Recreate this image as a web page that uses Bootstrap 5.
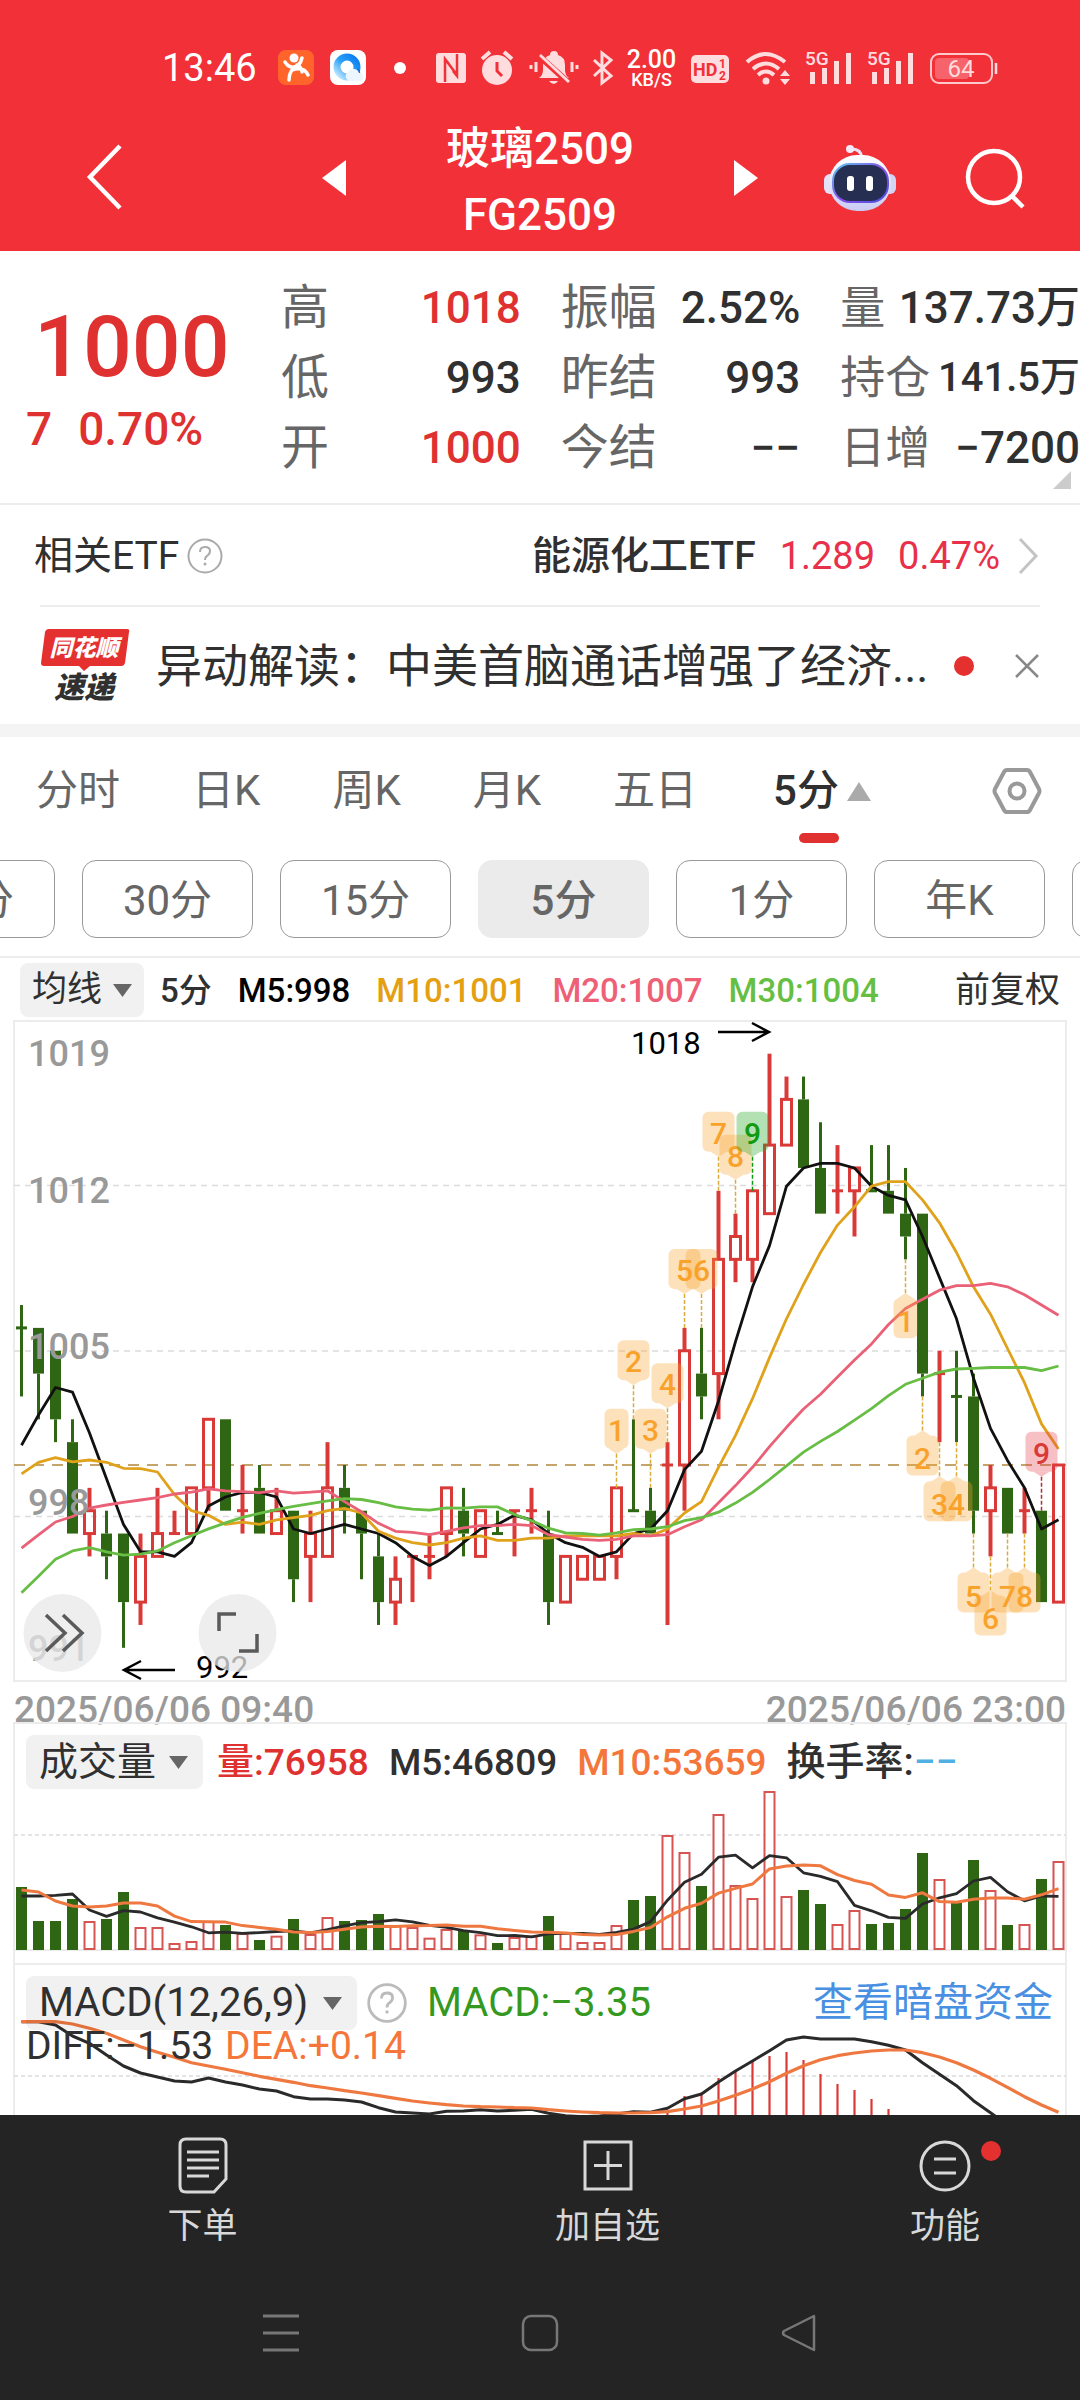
<!DOCTYPE html>
<html lang="zh-CN">
<head>
<meta charset="utf-8">
<meta name="viewport" content="width=device-width, initial-scale=1">
<title>玻璃2509</title>
<link rel="stylesheet" href="https://cdn.jsdelivr.net/npm/bootstrap@5.3.0/dist/css/bootstrap.min.css">
<style>
:root{--up:#e03131;--ink:#303030;--mute:#666;--soft:#999;--line:#ececec}
body{font-family:Roboto,"Noto Sans CJK SC",sans-serif;color:var(--ink);background:#fff;line-height:1}
button{font:inherit;color:inherit;background:none;border:0;padding:0}
svg{display:block;flex:none;overflow:visible}
a{text-decoration:none;color:inherit}
.up{color:var(--up)}
.app-head{background:#f23037;color:#fff;height:251px}
.status-row{height:112px;padding:24px 82px 0 162px}
.status-icons{gap:14px}
.clock{font-size:38px;width:92px}
.speed{width:51px;font-size:25px;line-height:23px;text-align:center;font-weight:500}
.speed-unit{font-size:18px;line-height:18px}
.title-row{height:132px}
.title-side{width:calc((100% - 436px)/2)}
.title-mid{width:436px}
.title-mid h1{font-size:44px;line-height:66px;margin:0;padding-top:8px;font-weight:500;text-align:center}
.pad-back{padding-left:86px}
.pad-tools{padding-right:55px;gap:69px}
.quote{height:254px;border-bottom:2px solid var(--line);position:relative}
.price-col{width:284px;padding:50px 0 0 26px}
.price-big{font-size:86px;line-height:92px;padding-left:8px;font-weight:500}
.price-chg{font-size:46px;line-height:72px;gap:26px;font-weight:500}
.stat-cols{gap:40px;padding-top:22px;min-width:0;margin-left:-3px}
.stat-cols dl{flex:1 1 0;min-width:0;margin:0}
.stat-cols dl>div{display:flex;justify-content:space-between;align-items:center;height:70px;white-space:nowrap}
.stat-cols dt{font-size:48px;font-weight:400;color:var(--mute)}
.stat-cols dd{font-size:44px;font-weight:500;margin:0}
.stat-cols .tight dt{font-size:45px}
.stat-cols .tight .small-val{font-size:40px}
.corner{position:absolute;right:9px;bottom:14px}
.etf-row{height:100px;padding:2px 40px 0 34px;font-size:39px}
.etf-row .nums{font-size:38px;gap:23px;color:#e8304a}
.news-row{height:119px;margin:0 40px;border-top:2px solid var(--line)}
.news-text{font-size:46px;line-height:60px;padding-left:26px;white-space:nowrap}
.news-dot{margin-left:auto;margin-right:40px}
.band{height:13px;background:#f4f4f4}
.period-tabs{height:112px;padding:0 38px 4px 36px;gap:72px;font-size:42px;color:var(--mute)}
.period-tabs a{position:relative;line-height:110px;white-space:nowrap}
.period-tabs a.on{color:var(--ink);font-weight:500}
.period-tabs a.on::after{content:"";position:absolute;right:0;bottom:3px;width:40px;height:10px;border-radius:5px;background:var(--up)}
.pill-row{height:109px;padding-top:11px;gap:27px;overflow:hidden;border-bottom:2px solid var(--line)}
.pill-row button{flex:none;width:171px;height:78px;padding-top:4px;border:1px solid #999;border-radius:14px;font-size:42px;color:var(--mute)}
.pill-row button:first-child{margin-left:-116px}
.pill-row button.on{background:#ebebeb;border-color:#ebebeb;font-weight:500}
.pick{appearance:none;border:0;border-radius:8px;color:var(--ink);background:rgba(0,0,0,.055) url("data:image/svg+xml,%3Csvg xmlns='http://www.w3.org/2000/svg' width='19' height='13'%3E%3Cpath d='M0 0h19l-9.500 13z' fill='%23666'/%3E%3C/svg%3E") no-repeat right 15px center;height:54px;padding:0 48px 0 13px;line-height:54px}
.ma-row{height:62px;padding:2px 20px 0 20px;gap:26px;font-size:33px;font-weight:500;white-space:nowrap}
.ma-row .pick{font-size:35px;padding:0 41px 0 12px;margin-right:-10px;font-weight:400;background-position:right 12px center}
.ma-row .adjust{font-size:35px;font-weight:400}
.plots{padding:0 13px}
.plots svg.plot{width:100%;height:auto;overflow:hidden}
.dates{height:40px;font-size:37px;line-height:56px;color:var(--soft);font-weight:500;padding:0 1px}
.panel{position:relative}
.panel-legend{position:absolute;left:13px;right:14px;top:13px;gap:20px;white-space:nowrap;height:54px}
.vol-legend{font-size:37px;font-weight:500}
.vol-legend .pick{font-size:39px;padding-right:46px;margin-right:-6px;font-weight:400}
.vol-legend .turnover{font-size:39px}
.macd-legend{font-size:40px}
.macd-legend .pick{font-size:40px;margin-right:-10px}
.macd-sub{position:absolute;left:13px;top:61px;font-size:39px;line-height:44px;gap:12px}
.foot{background:#242424;color:#d8d8d8;height:285px}
.foot-item{height:134px;padding-top:20px;gap:14px;font-size:35px}
.w-wide{width:37.5%}
.w-slim{width:25%}
.sys-row{height:168px;gap:223px}
.t-axis{font-size:36px;font-weight:500;fill:#999}
.t-note{font-size:31px;fill:#000}
.t-tag{font-size:30px;font-weight:500;text-anchor:middle}
</style>
</head>
<body>
<header class="app-head">
  <div class="status-row d-flex align-items-center">
    <span class="clock">13:46</span>
    <svg class="ms-4" width="36" height="36" viewBox="0 0 36 36"><rect width="36" height="35" rx="8" fill="#ff652b"/><circle cx="16" cy="8" r="4.500" fill="#fff"/><path d="M7 12q4 6 9 5 6-1 8-9M16 17q-5 6-5 13M14 20q12-4 16 5M19 15q5 2 5 7" stroke="#fff" stroke-width="3.500" fill="none" stroke-linecap="round"/></svg>
    <svg class="ms-3" width="36" height="36" viewBox="0 0 36 36"><defs><linearGradient id="qb" x1="1" y1="0" x2="0" y2="1"><stop offset="0" stop-color="#0b7cf0"/><stop offset=".5" stop-color="#2aa0f5"/><stop offset="1" stop-color="#c9ebff"/></linearGradient></defs><rect width="36" height="35" rx="8" fill="#fff"/><circle cx="17" cy="17" r="10" fill="none" stroke="url(#qb)" stroke-width="7"/><path d="M28 18q3 3 2 8h-6z" fill="#0d6fe0"/><path d="M19 31a5 5 0 0 1-1-9 6 6 0 0 1 11 1 4 4 0 0 1 1 8z" fill="#edf6ff"/></svg>
    <svg width="68" height="36" viewBox="0 0 68 36"><circle cx="34" cy="18" r="6" fill="#fff"/></svg>
    <div class="status-icons d-flex align-items-center ms-auto">
      <svg width="30" height="32" viewBox="0 0 30 32"><rect y="1" width="30" height="30" rx="3" fill="#ffdcde"/><path d="M9 30V7l12 16M9 7q0 0 4 5M21 2v22l-4-5" stroke="#f23037" stroke-width="2.500" fill="none"/></svg>
      <svg width="35" height="36" viewBox="0 0 35 36"><circle cx="17" cy="20" r="15" fill="#ffdcde"/><path d="M2 9l8-7M32 9l-8-7" stroke="#ffdcde" stroke-width="4"/><path d="M17 12v9l5 5" stroke="#f23037" stroke-width="3" fill="none"/></svg>
      <svg width="50" height="36" viewBox="0 0 50 36"><path d="M10 28q4-3 4-8v-5q0-8 7-10q0-4 4-4t4 4q7 2 7 10v5q0 5 4 8zM20 31h9q-4 6-9 0z" fill="#ffdcde"/><path d="M9 5l31 28" stroke="#f23037" stroke-width="6"/><path d="M11 5l29 27" stroke="#ffdcde" stroke-width="3"/><path d="M7 12v10M43 12v10M2 15v4M48 15v4" stroke="#ffdcde" stroke-width="3"/></svg>
      <svg width="19" height="36" viewBox="0 0 19 36"><path d="M1 10l17 16-9 7V3l9 7L1 26" stroke="#ffdcde" stroke-width="3" fill="none"/></svg>
      <div class="speed"><div>2.00</div><div class="speed-unit">KB/S</div></div>
      <svg width="38" height="36" viewBox="0 0 38 36"><rect y="5" width="38" height="28" rx="5" fill="#ffdcde"/><g fill="#f23037" font-weight="700"><text x="2" y="26" font-size="18">HD</text><text x="28" y="18" font-size="12">1</text><text x="28" y="30" font-size="12">2</text></g></svg>
      <svg width="48" height="36" viewBox="0 0 48 36"><g fill="none" stroke="#ffdcde" stroke-width="4"><path d="M4 12q18-16 38 0M10 19q13-11 26 0M15 25q8-7 16 0"/></g><circle cx="23" cy="31" r="3.500" fill="#ffdcde"/><path d="M37 26l5-6 5 6zM37 29h10l-5 6z" fill="#ffdcde"/></svg>
      <svg width="48" height="36" viewBox="0 0 48 36"><g fill="#ffdcde"><text x="0" y="15" font-size="19" font-weight="500">5G</text><path d="M5 22h5v12H5zM17 18h5v16h-5zM29 11h5v23h-5zM41 3h5v31h-5z"/></g></svg>
      <svg width="49" height="36" viewBox="0 0 49 36"><g fill="#ffdcde"><text x="0" y="15" font-size="19" font-weight="500">5G</text><path d="M5 22h5v12H5zM17 18h5v16h-5zM29 11h5v23h-5zM41 3h5v31h-5z"/></g></svg>
      <svg width="68" height="36" viewBox="0 0 68 36"><rect x="1" y="4" width="61" height="29" rx="8" fill="none" stroke="#ffc9cc" stroke-width="2"/><rect x="5" y="8" width="34" height="21" rx="4" fill="#f6636a"/><path d="M66 13v11" stroke="#ffdcde" stroke-width="2.500"/><text x="31" y="27" font-size="24" text-anchor="middle" fill="#ffdcde">64</text></svg>
    </div>
  </div>
  <div class="title-row d-flex align-items-center">
    <div class="title-side pad-back"><button aria-label="返回"><svg width="38" height="68" viewBox="0 0 38 68"><path d="M34 3L4 34l30 31" fill="none" stroke="#fff" stroke-width="4.500"/></svg></button></div>
    <div class="title-mid d-flex align-items-center justify-content-between">
      <button aria-label="上一个"><svg width="24" height="36"><path d="M24 0v36L0 18z" fill="#fff"/></svg></button>
      <h1>玻璃2509<br>FG2509</h1>
      <button aria-label="下一个"><svg width="24" height="36"><path d="M0 0v36l24-18z" fill="#fff"/></svg></button>
    </div>
    <div class="title-side d-flex justify-content-end align-items-center pad-tools">
      <button aria-label="智能助手"><svg width="72" height="68" viewBox="0 0 72 68"><defs><linearGradient id="rb" x1="0" y1="0" x2="0" y2="1"><stop offset="0" stop-color="#fff"/><stop offset="1" stop-color="#c9cbf3"/></linearGradient><linearGradient id="rf" x1="0" y1="0" x2="1" y2="1"><stop offset="0" stop-color="#55c8ee"/><stop offset=".5" stop-color="#8a4ee8"/><stop offset="1" stop-color="#4a50e0"/></linearGradient></defs><path d="M26 5q11-1 12 9" fill="none" stroke="#e8e2f6" stroke-width="3"/><circle cx="26" cy="5" r="4" fill="#f3e9f8"/><rect x="0" y="30" width="14" height="20" rx="6" fill="#e3e2f8"/><rect x="58" y="30" width="14" height="20" rx="6" fill="#d3d3f5"/><rect x="5" y="11" width="62" height="56" rx="28" fill="url(#rb)"/><rect x="9" y="20" width="55" height="38" rx="17" fill="#262f52" stroke="url(#rf)" stroke-width="2"/><rect x="23" y="32" width="7" height="15" rx="3" fill="#fff"/><rect x="42" y="32" width="7" height="15" rx="3" fill="#fff"/></svg></button>
      <button aria-label="搜索"><svg width="60" height="60" viewBox="0 0 60 60"><circle cx="29" cy="29" r="26" fill="none" stroke="#fff" stroke-width="4.500"/><path d="M47 48l11 11" stroke="#fff" stroke-width="4.500"/></svg></button>
    </div>
  </div>
</header>

<section class="quote d-flex">
  <div class="price-col up">
    <div class="price-big">1000</div>
    <div class="price-chg d-flex"><span>7</span><span>0.70%</span></div>
  </div>
  <div class="stat-cols d-flex flex-fill">
    <dl><div><dt>高</dt><dd class="up">1018</dd></div><div><dt>低</dt><dd>993</dd></div><div><dt>开</dt><dd class="up">1000</dd></div></dl>
    <dl><div><dt>振幅</dt><dd>2.52%</dd></div><div><dt>昨结</dt><dd>993</dd></div><div><dt>今结</dt><dd>−−</dd></div></dl>
    <dl class="tight"><div><dt>量</dt><dd>137.73万</dd></div><div><dt>持仓</dt><dd class="small-val">141.5万</dd></div><div><dt>日增</dt><dd>−7200</dd></div></dl>
  </div>
  <svg class="corner" width="18" height="18"><path d="M18 0v18H0z" fill="#ccc"/></svg>
</section>

<div class="etf-row d-flex align-items-center">
  <span>相关ETF</span>
  <svg class="ms-2" width="36" height="36" viewBox="0 0 36 36"><circle cx="18" cy="18" r="16.500" fill="none" stroke="#aaa" stroke-width="2"/><path d="M13 14q0-5 5-5t5 4q0 3-3 5-2 1-2 4" fill="none" stroke="#aaa" stroke-width="2"/><circle cx="18" cy="26" r="1.500" fill="#aaa"/></svg>
  <a href="#" class="d-flex align-items-center ms-auto"><span class="fw-medium me-4">能源化工ETF</span><span class="nums d-flex"><span>1.289</span><span>0.47%</span></span>
  <svg class="ms-3" width="24" height="38" viewBox="0 0 24 38"><path d="M4 2l16 17L4 36" fill="none" stroke="#c4c4c4" stroke-width="3"/></svg></a>
</div>
<div class="news-row d-flex align-items-center">
  <svg width="90" height="76" viewBox="0 0 90 76" aria-label="同花顺速递"><path d="M9 1h78q3 0 2 3l-4 31q-1 3-3 3H50l-6 5-5-5H4q-3 0-3-3L5 4q1-3 4-3z" fill="#e53030"/><text x="44" y="28" font-size="23" font-weight="900" font-style="italic" text-anchor="middle" fill="#fff">同花顺</text><text x="44" y="70" font-size="30" font-weight="900" font-style="italic" text-anchor="middle" fill="#303030">速递</text></svg>
  <a href="#" class="news-text">异动解读：中美首脑通话增强了经济...</a>
  <svg class="news-dot" width="20" height="20"><circle cx="10" cy="10" r="10" fill="#e53030"/></svg>
  <button aria-label="关闭"><svg width="26" height="26" viewBox="0 0 26 26"><path d="M2 2l22 22M24 2L2 24" stroke="#888" stroke-width="2.500"/></svg></button>
</div>
<div class="band"></div>

<nav class="period-tabs d-flex align-items-center">
  <a href="#">分时</a><a href="#">日K</a><a href="#">周K</a><a href="#">月K</a><a href="#">五日</a>
  <span class="d-flex align-items-center ms-1"><a href="#" class="on">5分</a><svg class="ms-2" width="24" height="19"><path d="M12 0l12 19H0z" fill="#aaa"/></svg></span>
  <button class="ms-auto" aria-label="设置"><svg width="50" height="46" viewBox="0 0 50 46"><path d="M15 2h20q2 0 3 2l9 17q1 2 0 4l-9 17q-1 2-3 2H15q-2 0-3-2L3 25q-1-2 0-4l9-17q1-2 3-2z" fill="none" stroke="#999" stroke-width="4"/><circle cx="25" cy="23" r="7.500" fill="none" stroke="#999" stroke-width="4"/></svg></button>
</nav>
<div class="pill-row d-flex">
  <button>60分</button><button>30分</button><button>15分</button><button class="on">5分</button><button>1分</button><button>年K</button><button>季K</button>
</div>
<div class="ma-row d-flex align-items-center">
  <select class="pick" aria-label="主图指标"><option>均线</option></select>
  <span>5分</span><span style="color:#000">M5:998</span><span style="color:#e4a010">M10:1001</span><span style="color:#ee6076">M20:1007</span><span style="color:#66bf43">M30:1004</span>
  <a href="#" class="adjust ms-auto">前复权</a>
</div>

<main class="plots">
  <svg class="plot" id="price" viewBox="13 1020 1054 662"></svg>
  <div class="dates d-flex justify-content-between"><span>2025/06/06 09:40</span><span>2025/06/06 23:00</span></div>
  <section class="panel">
    <svg class="plot" id="volume" viewBox="13 1722 1054 241"></svg>
    <div class="panel-legend vol-legend d-flex align-items-center">
      <select class="pick" aria-label="副图指标一"><option>成交量</option></select>
      <span class="up">量:76958</span><span>M5:46809</span><span style="color:#f5763a">M10:53659</span><span class="turnover">换手率:<span style="color:#4fb0e4">−−</span></span>
    </div>
  </section>
  <section class="panel">
    <svg class="plot" id="macd" viewBox="13 1963 1054 152"></svg>
    <div class="panel-legend macd-legend d-flex align-items-center">
      <select class="pick" aria-label="副图指标二"><option>MACD(12,26,9)</option></select>
      <svg width="40" height="40" viewBox="0 0 36 36"><circle cx="18" cy="18" r="16.500" fill="none" stroke="#bbb" stroke-width="2.500"/><path d="M13 14q0-5 5-5t5 4q0 3-3 5-2 1-2 4" fill="none" stroke="#bbb" stroke-width="2.500"/><circle cx="18" cy="26" r="1.500" fill="#bbb"/></svg>
      <span style="color:#35991f">MACD:−3.35</span>
      <a href="#" class="ms-auto" style="color:#4a90e2">查看暗盘资金</a>
    </div>
    <div class="macd-sub d-flex"><span>DIFF:−1.53</span><span style="color:#f5763a">DEA:+0.14</span></div>
  </section>
</main>

<footer class="foot">
  <div class="d-flex">
    <a href="#" class="foot-item w-wide d-flex flex-column align-items-center"><svg width="56" height="60" viewBox="0 0 56 60"><path d="M11 4h34q6 0 6 6v34L39 57H11q-6 0-6-6V10q0-6 6-6z" fill="none" stroke="#d8d8d8" stroke-width="3"/><path d="M12 17h32M12 25h32M12 33h32M12 41h22" stroke="#d8d8d8" stroke-width="3"/></svg>下单</a>
    <a href="#" class="foot-item w-wide d-flex flex-column align-items-center"><svg width="56" height="60" viewBox="0 0 56 60"><path d="M5 7h46v47H5zM14 30.500h28M28 16v29" fill="none" stroke="#d8d8d8" stroke-width="3"/></svg>加自选</a>
    <a href="#" class="foot-item w-slim d-flex flex-column align-items-center"><svg width="56" height="60" viewBox="0 0 56 60"><circle cx="28" cy="31" r="24" fill="none" stroke="#d8d8d8" stroke-width="3"/><path d="M17 24h22M17 38h22" stroke="#d8d8d8" stroke-width="3"/><circle cx="74" cy="16" r="10" fill="#e53030"/></svg>功能</a>
  </div>
  <div class="sys-row d-flex justify-content-center align-items-center">
    <button aria-label="最近任务"><svg width="36" height="38"><path d="M0 2h36M0 19h36M0 36h36" stroke="#777" stroke-width="3"/></svg></button>
    <button aria-label="主屏幕"><svg width="36" height="38"><rect x="1" y="2" width="34" height="34" rx="8" fill="none" stroke="#777" stroke-width="2.500"/></svg></button>
    <button aria-label="返回上级"><svg width="36" height="38"><path d="M33 2v34L3 21q-2-2 0-4z" fill="none" stroke="#777" stroke-width="2.500" stroke-linejoin="round"/></svg></button>
  </div>
</footer>

<script src="https://cdn.jsdelivr.net/npm/bootstrap@5.3.0/dist/js/bootstrap.bundle.min.js"></script>
<script>
// direction (+ rising, - falling), body bottom, body top, low, high
const bars = `- 1006 1006 1003 1007|- 1004 1006 1002 1006|- 1002 1005 1001 1005|- 997 1001 997 1002|+ 997 998 996 999|- 996 997 995 998|- 994 997 992 997|+ 994 996 993 997|+ 996 997 996 999|+ 997 997 997 998|+ 997 999 997 999|+ 999 1002 998 1002|- 998 1002 998 1002|+ 998 998 997 1000|- 997 999 997 1000|+ 997 998 997 999|- 995 998 994 998|+ 996 997 994 998|+ 996 999 996 1001|- 998 999 997 1000|- 997 998 995 998|- 994 996 993 997|+ 994 995 993 996|+ 996 996 994 996|+ 996 996 995 997|+ 997 999 996 999|- 997 998 996 999|+ 996 998 996 998|- 997 997 997 998|+ 998 998 996 998|+ 998 998 997 999|- 994 997 993 998|+ 994 996 994 996|+ 995 996 995 996|+ 995 996 995 996|+ 996 999 995 999|- 998 998 998 1002|- 997 998 997 999|+ 1000 1000 993 1001|+ 1000 1005 998 1006|- 1003 1004 1002 1006|+ 1004 1009 1002 1012|+ 1009 1010 1008 1011|+ 1009 1012 1008 1012|+ 1011 1014 1011 1018|+ 1014 1016 1014 1017|- 1013 1016 1013 1017|- 1011 1013 1011 1015|+ 1012 1012 1011 1014|+ 1012 1013 1010 1013|- 1012 1012 1012 1014|- 1011 1012 1011 1014|- 1010 1011 1009 1013|- 1004 1011 1003 1011|+ 1004 1004 1001 1005|- 1003 1003 1001 1005|- 998 1003 997 1004|+ 998 999 996 1000|- 997 999 997 999|+ 998 998 997 999|- 994 998 994 998|+ 994 1000 994 1000`
  .split('|').map(s => { const [c, a, b, l, h] = s.split(' '); return { up: c === '+', a: +a, b: +b, l: +l, h: +h }; });
const RED = '#d93a38', GREEN = '#2f6613';
const X = i => 21.5 + 17 * i;
const Y = p => 1465 + (1000 - p) * 22.85;
const line = (ys, c, w) => `<polyline points="${ys.map((y, i) => X(i) + ',' + y.toFixed(1)).join(' ')}" fill="none" stroke="${c}" stroke-width="${w}" stroke-linejoin="round"/>`;
const mean = (src, n, head) => src.map((_, i) => i < head.length ? head[i] : src.slice(i - n + 1, i + 1).reduce((s, v) => s + v, 0) / n);
const rule = (y, dash = '6 5', c = '#dcdcdc', w = 1.5) => `<path d="M14 ${y}H1066" stroke="${c}" stroke-width="${w}" stroke-dasharray="${dash}"/>`;

// price plot
let s = '<rect x="14" y="1021" width="1052" height="660" fill="none" stroke="#ececec" stroke-width="2"/>' + rule(1185.5) + rule(1351) + rule(1516.5) + rule(1465, '11 8', '#c4a46a', 2);
bars.forEach((b, i) => {
  const x = X(i), c = b.up ? RED : GREEN, w = b.up ? 4 : 3;
  const t = Y(b.b), u = Y(b.a);
  if (b.h > b.b) s += `<path d="M${x} ${Y(b.h)}V${t}" stroke="${c}" stroke-width="${w}"/>`;
  if (b.l < b.a) s += `<path d="M${x} ${u}V${Y(b.l)}" stroke="${c}" stroke-width="${w}"/>`;
  if (b.a === b.b) s += `<path d="M${x - 5.5} ${t}h11" stroke="${c}" stroke-width="3"/>`;
  else if (b.up) s += `<rect x="${x - 5}" y="${t}" width="10" height="${u - t}" fill="none" stroke="${c}" stroke-width="3"/>`;
  else s += `<rect x="${x - 5.5}" y="${t}" width="11" height="${u - t}" fill="${c}"/>`;
});
const closes = bars.map(b => Y(b.up ? b.b : b.a));
const k = a => a.map(v => 1010 + v * .4592);
s += line(mean(closes, 5, k([948,882,822,832])), '#111', 2.8)
  + line(mean(closes, 10, k([1010,985,975,984,980,985,998,999,1006])), '#e0a11b', 2.8)
  + line(mean(closes, 20, k([1172,1143,1115,1103,1085,1078,1072,1067,1062,1054,1050,1043,1047,1049,1051,1047,1052,1050,1047])), '#ea6076', 2.8)
  + line(mean(closes, 30, k([1269,1233,1196,1178,1171,1180,1187,1185,1178,1160,1145,1130,1117,1105,1096,1088,1081,1075,1069,1064,1066,1073,1082,1087,1089,1084,1085,1082,1082])), '#68bd45', 2.8);
const tag = (i, n, above, c = '#f9a22b', bg = 'rgba(250,165,50,.33)', st = '#d9ac3c') => {
  const x = X(i), d = above ? -1 : 1, y0 = Y(above ? bars[i].h : bars[i].l), y1 = y0 + 34 * d, y2 = y1 + 5 * d, hw = n === 1 ? 12 : 16;
  const top = above ? y2 - 40 : y2, tip = above ? `M${x - 8} ${y2}h16l-8 5z` : `M${x - 8} ${y2}h16l-8-5z`;
  return `<path d="M${x} ${y0}V${y1}" stroke="${st}" stroke-width="1.5" stroke-dasharray="4 2"/><path d="${tip}" fill="${bg}"/><rect x="${x - hw}" y="${top}" width="${2 * hw}" height="40" rx="6" fill="${bg}"/><text class="t-tag" x="${x}" y="${top + (above ? 32 : 34)}" fill="${c}">${n}</text>`;
};
for (let n = 1; n <= 8; n++) s += tag(34 + n, n, true) + tag(51 + n, n, false);
s += tag(43, 9, true, '#119a11', 'rgba(40,170,40,.35)', '#119a11') + tag(60, 9, true, '#d93a38', 'rgba(230,60,70,.32)', '#a33');
[[1019,1053],[1012,1190],[1005,1346],[998,1502],[991,1648]].forEach(([t, y]) => s += `<text class="t-axis" x="28" y="${y + 13}">${t}</text>`);
s += `<text class="t-note" x="631" y="1054">1018</text><path d="M718 1032h50M752 1023l17 9-17 9" fill="none" stroke="#000" stroke-width="2.5"/>
<text class="t-note" x="196" y="1678">992</text><path d="M175 1670h-50M141 1661l-17 9 17 9" fill="none" stroke="#000" stroke-width="2.5"/>
<g fill="#e8e8e8" fill-opacity=".75"><circle cx="62.500" cy="1633" r="39"/><circle cx="237.500" cy="1633" r="39"/></g>
<path d="M46 1615l19 18-19 18M63 1615l19 18-19 18M219 1631v-17h17M257 1634v17h-18" fill="none" stroke="#5a5a5a" stroke-width="3.5"/>`;
price.innerHTML = s;

// volume plot: tops of the bars in thirds of a pixel, measured down from 1670
const vt = [651,753,753,687,756,747,666,774,774,822,816,756,765,792,810,800,747,795,744,753,750,732,768,774,806,780,783,796,819,804,800,738,790,819,819,768,690,678,498,549,648,435,648,687,366,681,660,702,765,723,762,759,717,549,630,699,570,663,765,765,627,576];
const V = v => 1670 + v / 3;
s = '<path d="M14 1963V1723H1066V1963" fill="none" stroke="#ececec" stroke-width="2"/>' + rule(1835, '4 3') + '<path d="M14 1950H1066" stroke="#ececec" stroke-width="2"/>';
vt.forEach((v, i) => {
  const x = X(i), y = V(v);
  s += bars[i].up ? `<rect x="${x - 5}" y="${y}" width="10" height="${1949 - y}" fill="#fff" stroke="#d65552" stroke-width="2"/>` : `<rect x="${x - 5.5}" y="${y}" width="11" height="${1950 - y}" fill="${GREEN}"/>`;
});
const vy = vt.map(V);
s += line(mean(vy, 5, [678,678,676,672].map(V)), '#2a2a2a', 2.8) + line(mean(vy, 10, [660,666,693,708,711,708,699,699,708].map(V)), '#ee7840', 3);
volume.innerHTML = s;

// MACD plot
const diff = [1055,1055,1065,1098,1120,1155,1188,1209,1221,1233,1236,1224,1236,1245,1257,1263,1280,1287,1287,1290,1296,1313,1326,1329,1332,1324,1323,1319,1323,1321,1318,1330,1337,1340,1338,1332,1325,1327,1315,1286,1272,1236,1203,1173,1142,1110,1101,1107,1107,1107,1115,1126,1140,1178,1213,1247,1292,1328,1365];
const dea = [1055,1055,1055,1062,1075,1090,1110,1130,1147,1162,1178,1188,1198,1208,1219,1228,1237,1247,1254,1262,1269,1277,1285,1293,1299,1304,1308,1310,1311,1313,1314,1319,1323,1326,1328,1329,1329,1328,1325,1317,1308,1293,1276,1257,1235,1210,1187,1169,1157,1149,1143,1140,1140,1148,1161,1178,1200,1225,1252,1280,1305,1327];
const hist = [1322,1278,1268,1224,1203,1173,1158,1146,1170,1212,1242,1260,1287,1317];
s = '<path d="M14 2120V1964H1066V2120" fill="none" stroke="#ececec" stroke-width="2"/>' + rule(2076, '4 3');
hist.forEach((v, j) => s += `<path d="M${X(38 + j)} ${V(v)}V2120" stroke="#d93a38" stroke-width="2.2"/>`);
s += line(diff.map(V), '#2a2a2a', 3) + line(dea.map(V), '#ee7840', 3.2);
macd.innerHTML = s;
</script>
</body>
</html>
